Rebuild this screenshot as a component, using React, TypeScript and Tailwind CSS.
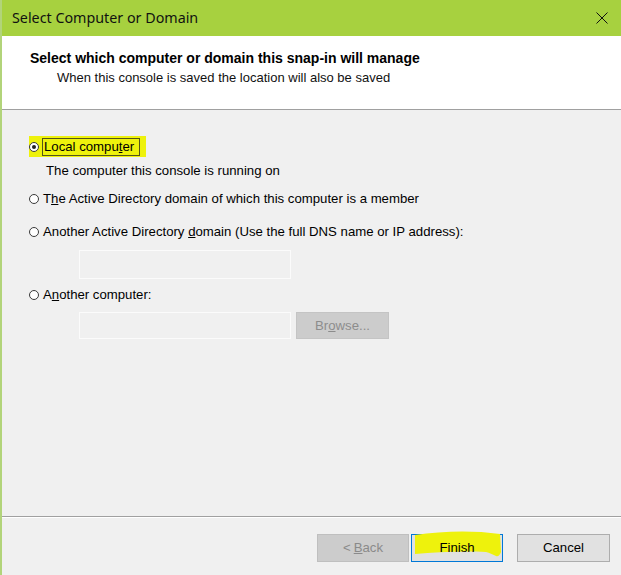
import React from "react";

const F = { fontFamily: '"Liberation Sans", Arial, sans-serif' };

function Radio({ checked }: { checked?: boolean }) {
  return (
    <span className="relative inline-block w-[10px] h-[10px] rounded-full border border-[#3a3a3a] bg-white shrink-0">
      {checked && (
        <span className="absolute left-[2px] top-[2px] w-[4px] h-[4px] rounded-full bg-[#222222]" />
      )}
    </span>
  );
}

export default function App() {
  return (
    <div
      className="w-[621px] h-[575px] flex flex-col border-l-2 border-[#b2d47a] bg-[#f0f0f0] text-[13.2px] text-black overflow-hidden"
      style={F}
    >
      {/* Title bar */}
      <div className="h-[36px] bg-[#a7d13f] flex items-center justify-between pl-[10px] pr-[14px] shrink-0">
        <span className="text-[14.3px] text-[#111111]" style={{ fontFamily: '"Noto Sans", "Open Sans", sans-serif' }}>
          Select Computer or Domain
        </span>
        <svg width="12" height="12" viewBox="0 0 12 12" className="mr-[-1px]">
          <path d="M0.5 0.5 L11.5 11.5 M11.5 0.5 L0.5 11.5" stroke="#111" strokeWidth="1" />
        </svg>
      </div>

      {/* Header */}
      <div className="h-[74px] bg-white border-b border-[#a0a0a0] flex flex-col pl-[28px] pt-[13px] shrink-0">
        <div className="font-bold text-[14px] leading-[18px]">Select which computer or domain this snap-in will manage</div>
        <div className="pl-[27px] mt-[2px] text-[13px] leading-[18px] text-[#111]">When this console is saved the location will also be saved</div>
      </div>

      {/* Body */}
      <div className="flex-1 flex flex-col pt-[26px] border-b border-[#a0a0a0]">
        <div className="h-[21px] flex items-center pl-[27px]">
          <span className="inline-flex items-center h-[21px] bg-[#eef20c] pr-[6px]">
            <Radio checked />
            <span className="ml-[3px] border border-[#54541a] pl-[1px] pr-[5px] leading-[16px]">
              Local compu<u>t</u>er
            </span>
          </span>
        </div>
        <div className="h-[20px] mt-[4px] flex items-center pl-[44px]">The computer this console is running on</div>
        <div className="h-[20px] mt-[8px] flex items-center pl-[27px] gap-[4px]">
          <Radio />
          <span>
            T<u>h</u>e Active Directory domain of which this computer is a member
          </span>
        </div>
        <div className="h-[20px] mt-[13px] flex items-center pl-[27px] gap-[4px]">
          <Radio />
          <span>
            Another Active Directory <u>d</u>omain (Use the full DNS name or IP address):
          </span>
        </div>
        <div className="mt-[8px] pl-[77px]">
          <div className="w-[212px] h-[29px] border border-[#fbfbfb] bg-[#f0f0f0]" />
        </div>
        <div className="h-[20px] mt-[6px] flex items-center pl-[27px] gap-[4px]">
          <Radio />
          <span>
            A<u>n</u>other computer:
          </span>
        </div>
        <div className="mt-[7px] pl-[77px] flex gap-[5px]">
          <div className="w-[212px] h-[27px] border border-[#fbfbfb] bg-[#f0f0f0]" />
          <div className="w-[93px] h-[27px] bg-[#cccccc] border border-[#c4c4c4] flex items-center justify-center text-[#8c8c8c]">
            Br<u>o</u>wse...
          </div>
        </div>
      </div>

      {/* Footer */}
      <div className="h-[58px] shrink-0 flex justify-end items-start pt-[16px] pr-[11px] border-t border-white">
        <div className="w-[92px] h-[28px] bg-[#cccccc] border border-[#bfbfbf] flex items-center justify-center text-[#8a8a8a]">
          &lt; <u className="ml-[3px]">B</u>ack
        </div>
        <div className="relative ml-[2px] w-[92px] h-[28px] bg-[#e1e1e1] border border-[#0078d7] flex items-center justify-center">
          <svg className="absolute left-0 top-[-5px]" width="92" height="30" viewBox="0 0 92 30">
            <path d="M3 5 C30 1 60 0 88 4 L89 22 C88 25 86 27 84 26 C80 24 78 23 74 22 C50 21 25 22 3 24 Z" fill="#eef20c" />
          </svg>
          <span className="relative">Finish</span>
        </div>
        <div className="ml-[14px] w-[93px] h-[28px] bg-[#e1e1e1] border border-[#adadad] flex items-center justify-center">
          Cancel
        </div>
      </div>
    </div>
  );
}
